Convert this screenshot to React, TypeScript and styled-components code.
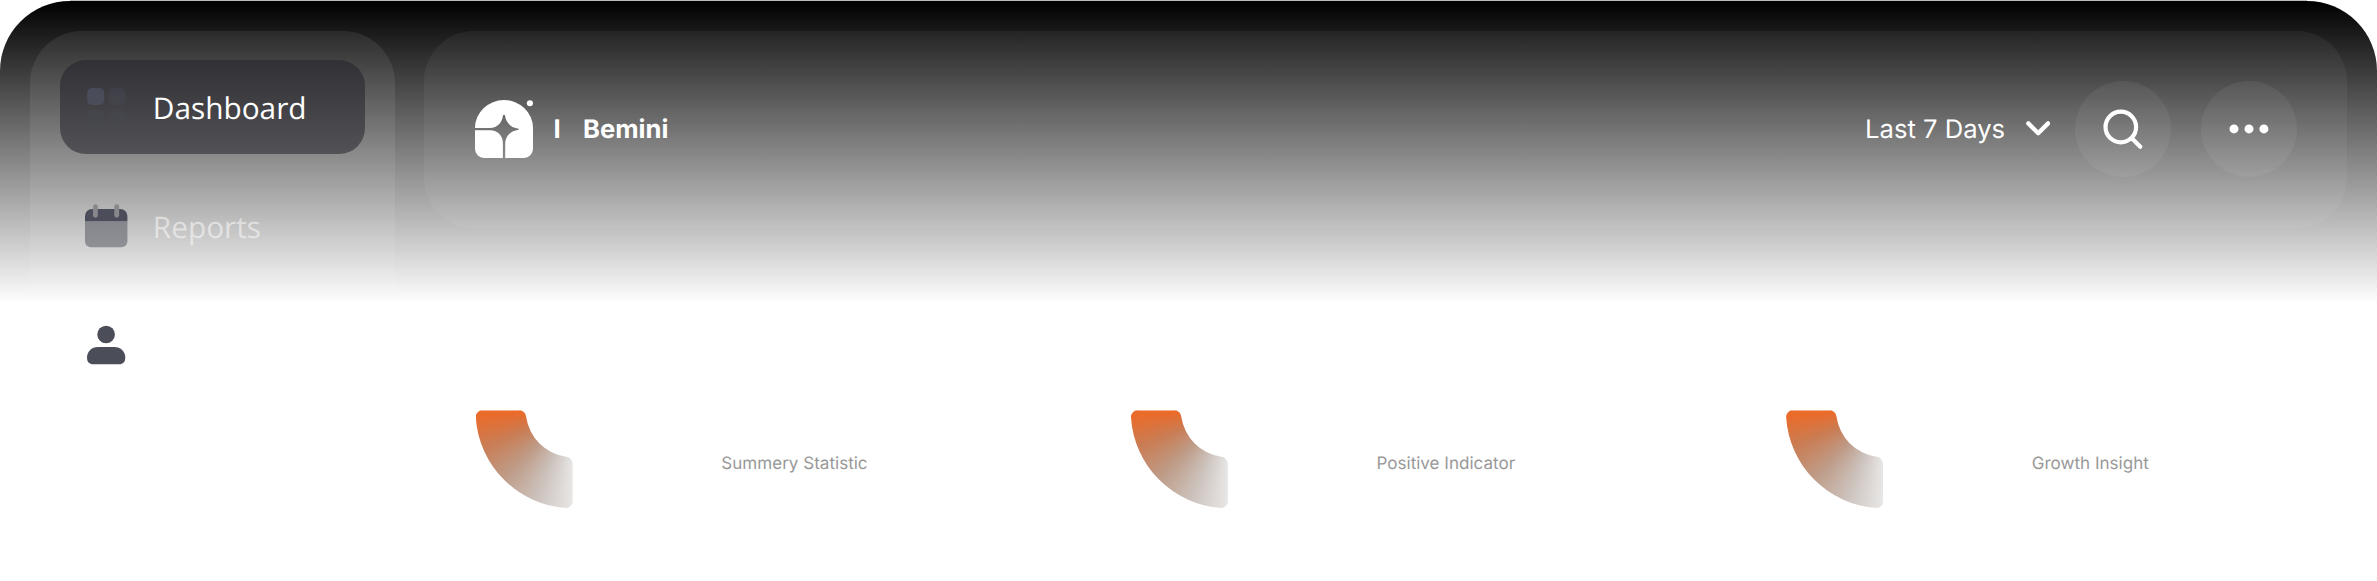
import React from "react";
import styled, { createGlobalStyle } from "styled-components";

const GlobalStyle = createGlobalStyle`
  * { box-sizing: border-box; }
  body { margin: 0; background: #fff; overflow: hidden; }
  svg { display: block; flex: none; }
`;

const Page = styled.div`
  display: flex;
  flex-direction: column;
  width: 100%;
  min-width: 2377px;
  height: 581px;
  overflow: hidden;
  font-family: Inter, "Liberation Sans", sans-serif;
  text-rendering: geometricPrecision;
`;

const TopEdge = styled.div`
  height: 1px;
  margin: 0 70px;
  background: #b9bebb;
`;

const Shell = styled.div`
  flex: 1;
  display: grid;
  grid-template-columns: 365px 1fr;
  column-gap: 29.3px;
  padding: 29.7px 30px 0;
  border-radius: 70px 70px 0 0;
  background: linear-gradient(to bottom, #000 0, #fff 303px);
`;

const Sidebar = styled.nav`
  display: flex;
  flex-direction: column;
  gap: 25.5px;
  padding: 29.5px 30px 0 29.5px;
  border-radius: 52px 52px 0 0;
  background: rgba(255, 255, 255, 0.08);
`;

const NavItem = styled.a<{ $active?: boolean }>`
  display: flex;
  align-items: center;
  gap: 24px;
  height: 93.5px;
  padding-left: 25.3px;
  border-radius: 26px;
  background: ${(p) => (p.$active ? "rgba(36, 36, 43, 0.55)" : "transparent")};
  color: ${(p) => (p.$active ? "#fff" : "rgba(255, 255, 255, 0.5)")};
  font: 400 29.8px/42px "Open Sans", "Noto Sans", sans-serif;
`;

const NavText = styled.span`
  padding-top: 2px;
`;

const Main = styled.main`
  display: flex;
  flex-direction: column;
  min-width: 0;
`;

const Header = styled.header`
  display: flex;
  align-items: center;
  justify-content: space-between;
  height: 197.3px;
  padding: 0 50.4px 0.7px 51px;
  border-radius: 50px;
  background: rgba(255, 255, 255, 0.05);
  color: #fff;
`;

const Brand = styled.div`
  display: flex;
  align-items: center;
  font-size: 25.6px;
  line-height: 32px;
  font-weight: 700;
`;

const BrandMark = styled.span`
  width: 29.6px;
  margin-left: 20.2px;
  padding-top: 3px;
`;

const BrandName = styled.span`
  padding-top: 3px;
`;

const Actions = styled.div`
  display: flex;
  align-items: center;
`;

const RangeSelect = styled.div`
  display: flex;
  align-items: center;
  gap: 21px;
  margin-right: 24.8px;
  font-size: 25.6px;
  line-height: 32px;
`;

const RangeLabel = styled.span`
  padding-top: 2px;
`;

const RoundButton = styled.button`
  display: grid;
  place-items: center;
  width: 96px;
  height: 96px;
  padding: 0;
  border: 0;
  border-radius: 50%;
  background: rgba(255, 255, 255, 0.06);

  & + & {
    margin-left: 29.4px;
  }
`;

const Stats = styled.section`
  display: grid;
  grid-template-columns: 655.2px 655.2px 1fr;
  margin-top: 182.4px;
  padding-left: 51.4px;
`;

const Stat = styled.article`
  display: flex;
  align-items: flex-start;
  gap: 148.6px;
`;

const StatArc = styled.div`
  flex: none;
  width: 97px;
  height: 98px;
  background: conic-gradient(
    from 180deg at 97px 0,
    #e8e7e6 0deg,
    #ccc2bc 22.5deg,
    #be9c88 45deg,
    #ca7c53 68deg,
    #ea6b2a 87deg,
    #ea6b2a 180deg
  );
  clip-path: path(
    "M6.5 0H43.5A6.8 6.8 0 0 1 50.5 6.5A47 47 0 0 0 90.4 46.4A7 7 0 0 1 97 53.2V91A6.5 6.5 0 0 1 90.3 97.6A97 97 0 0 1 .1 6.8A6.4 6.4 0 0 1 6.5 0Z"
  );
`;

const StatLabel = styled.span`
  margin-top: 43.8px;
  font-size: 17.07px;
  line-height: 20px;
  color: #999;
  white-space: nowrap;
`;

const DashboardIcon = () => (
  <svg width="44" height="44" fill="#4b4d5c">
    <rect x="2.2" y="3" width="17" height="17" rx="5" fillOpacity=".92" />
    <rect x="23.6" y="3" width="17" height="17" rx="5" fillOpacity=".3" />
    <rect x="2.2" y="24" width="17" height="17" rx="5" fillOpacity=".22" />
    <rect x="23.6" y="24" width="17" height="17" rx="5" fillOpacity=".22" />
  </svg>
);

const CalendarIcon = () => (
  <svg width="44" height="44">
    <path d="M0 17.3H42.4V37.3A6 6 0 0 1 36.4 43.3H6A6 6 0 0 1 0 37.3Z" fill="#4b4d5a" fillOpacity=".5" />
    <path d="M0 17.3V12A7 7 0 0 1 7 5H35.4A7 7 0 0 1 42.4 12V17.3Z" fill="#4b4d5a" />
    <rect x="8" y=".3" width="4.8" height="13.4" rx="2.4" fill="#87878c" />
    <rect x="29.3" y=".3" width="4.8" height="13.4" rx="2.4" fill="#87878c" />
  </svg>
);

const PersonIcon = () => (
  <svg width="44" height="44" fill="#4b4d59">
    <circle cx="21.1" cy="11.5" r="8.8" />
    <path d="M13 24H29.3C36 24 40.3 29 40.3 34.5C40.3 39 38 41.3 34 41.3H8.3C4.3 41.3 2 39 2 34.5C2 29 6.3 24 13 24Z" />
  </svg>
);

const Logo = () => (
  <svg width="58" height="58" fill="#fff">
    <path
      fillRule="evenodd"
      d="M0 28A29 28 0 0 1 58 28V49A9 9 0 0 1 49 58H30.2V43.5C30.2 36 36 30.5 43.7 29.7V28.7C36 27.8 30.8 22.5 29.9 15H28.1C27.2 22.5 22.5 28 15 28Z"
    />
    <path d="M0 30.2H15C23 30.2 27.9 36 27.9 43V58H9A9 9 0 0 1 0 49Z" />
    <circle cx="54.9" cy="3.3" r="3.05" />
  </svg>
);

const ChevronIcon = () => (
  <svg width="24.4" height="15" fill="none" stroke="#fff" strokeWidth="4.3" strokeLinecap="round" strokeLinejoin="round">
    <path d="M2.3 2.4L12.2 12.2L22.1 2.4" />
  </svg>
);

const SearchIcon = () => (
  <svg width="96" height="96" fill="none" stroke="#fff" strokeWidth="4.2" strokeLinecap="round">
    <circle cx="45.8" cy="46" r="15.3" />
    <path d="M57 57.5L65.3 65.7" />
  </svg>
);

const MoreIcon = () => (
  <svg width="96" height="96" fill="#fff">
    <circle cx="33" cy="47.9" r="4.5" />
    <circle cx="48" cy="47.9" r="4.5" />
    <circle cx="62.9" cy="47.9" r="4.5" />
  </svg>
);

const stats = ["Summery Statistic", "Positive Indicator", "Growth Insight"];

export default function App() {
  return (
    <Page>
      <GlobalStyle />
      <TopEdge />
      <Shell>
        <Sidebar>
          <NavItem $active>
            <DashboardIcon />
            <NavText>Dashboard</NavText>
          </NavItem>
          <NavItem>
            <CalendarIcon />
            <NavText>Reports</NavText>
          </NavItem>
          <NavItem aria-label="Profile">
            <PersonIcon />
          </NavItem>
        </Sidebar>
        <Main>
          <Header>
            <Brand>
              <Logo />
              <BrandMark>I</BrandMark>
              <BrandName>Bemini</BrandName>
            </Brand>
            <Actions>
              <RangeSelect>
                <RangeLabel>Last 7 Days</RangeLabel>
                <ChevronIcon />
              </RangeSelect>
              <RoundButton aria-label="Search">
                <SearchIcon />
              </RoundButton>
              <RoundButton aria-label="More">
                <MoreIcon />
              </RoundButton>
            </Actions>
          </Header>
          <Stats>
            {stats.map((label) => (
              <Stat key={label}>
                <StatArc />
                <StatLabel>{label}</StatLabel>
              </Stat>
            ))}
          </Stats>
        </Main>
      </Shell>
    </Page>
  );
}
